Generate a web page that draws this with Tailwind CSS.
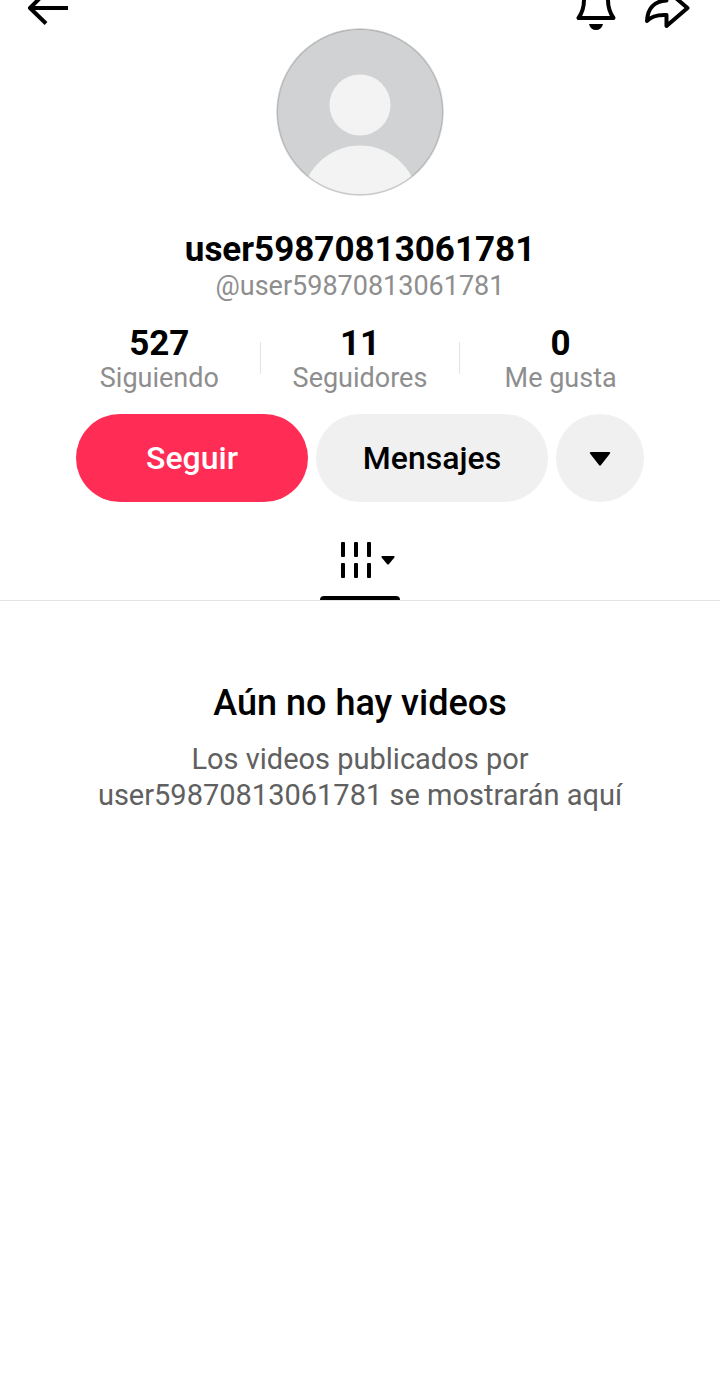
<!DOCTYPE html>
<html lang="es">
<head>
  <meta charset="UTF-8" />
  <meta name="viewport" content="width=device-width, initial-scale=1.0" />
  <title>user59870813061781</title>
  <script src="https://cdn.jsdelivr.net/npm/@tailwindcss/browser@4"></script>
</head>
<body class="bg-white min-h-screen font-['Roboto',sans-serif] text-black">

  <!-- Top bar, scrolled partly out of view -->
  <header class="h-7 flex items-start justify-between pl-6 pr-7">
    <button type="button" aria-label="Volver">
      <svg class="block w-12 h-8" viewBox="0 0 48 32" fill="none" stroke="currentColor" stroke-width="4">
        <path d="M44 8H7M22 -8L6 8L22 23.500" stroke-linejoin="round" />
      </svg>
    </button>
    <div class="flex gap-6">
      <button type="button" aria-label="Notificaciones">
        <svg class="block w-12 h-8" viewBox="0 0 48 32" fill="none" stroke="currentColor" stroke-width="4" stroke-linejoin="round">
          <path d="M12 -8V0C12 8 10 13 6.500 18H41.500C38 13 36 8 36 0V-8" />
          <path d="M17 24H31C30 28 27.500 30 24 30S18 28 17 24Z" fill="currentColor" stroke="none" />
        </svg>
      </button>
      <button type="button" aria-label="Compartir">
        <svg class="block w-12 h-8" viewBox="0 0 48 32" fill="none" stroke="currentColor" stroke-width="4" stroke-linejoin="round">
          <path d="M22.500 -10L43.500 8L22.500 26V15C13 14.500 7.500 16 3 21C3.500 9 10 1 22.500 0.500Z" />
        </svg>
      </button>
    </div>
  </header>

  <main>
    <section class="flex flex-col items-center">
      <svg class="w-42 h-42 rounded-full" viewBox="0 0 168 168" role="img" aria-label="Foto de perfil">
        <defs>
          <clipPath id="avatarClip"><circle cx="84" cy="84" r="83" /></clipPath>
        </defs>
        <g clip-path="url(#avatarClip)">
          <rect width="168" height="168" fill="#d0d2d3" />
          <circle cx="84" cy="77" r="30.500" fill="#f3f3f3" />
          <circle cx="84" cy="176" r="58.500" fill="#f3f3f3" />
        </g>
        <circle cx="84" cy="84" r="83" fill="none" stroke="#000" stroke-opacity="0.150" stroke-width="2" />
      </svg>

      <h1 class="mt-9 text-[35px] leading-9 font-bold">user59870813061781</h1>
      <p class="text-[27px] leading-9 text-[#8e8e8e]">@user59870813061781</p>

      <div class="mt-5 grid grid-cols-3 w-full max-w-[602px] text-center">
        <a href="#siguiendo" class="block">
          <span class="block text-[35px] leading-10 font-bold">527</span>
          <span class="block text-[27px] leading-7 text-[#8e8e8e]">Siguiendo</span>
        </a>
        <a href="#seguidores" class="flex items-center justify-between">
          <span class="w-px h-8 bg-[#e3e3e3]"></span>
          <span>
            <span class="block text-[35px] leading-10 font-bold">11</span>
            <span class="block text-[27px] leading-7 text-[#8e8e8e]">Seguidores</span>
          </span>
          <span class="w-px h-8 bg-[#e3e3e3]"></span>
        </a>
        <a href="#megusta" class="block">
          <span class="block text-[35px] leading-10 font-bold">0</span>
          <span class="block text-[27px] leading-7 text-[#8e8e8e]">Me gusta</span>
        </a>
      </div>

      <div class="mt-[22px] flex gap-2 w-full max-w-142 text-[32px] font-medium">
        <button type="button" class="flex-1 h-22 rounded-full bg-[#ff2c55] text-white">Seguir</button>
        <button type="button" class="flex-1 h-22 rounded-full bg-[#f0f0f0]">Mensajes</button>
        <button type="button" aria-label="Cuentas sugeridas" class="w-22 h-22 rounded-full bg-[#f0f0f0] flex items-center justify-center">
          <svg class="w-6 h-6" viewBox="0 0 24 24" fill="currentColor">
            <path d="M3 6H21Q23 6 22 7.500L13 19Q12 20.500 11 19L2 7.500Q1 6 3 6Z" />
          </svg>
        </button>
      </div>
    </section>

    <!-- Tabs -->
    <nav class="mt-4 flex justify-center border-b border-[#e3e3e3]">
      <button type="button" aria-label="Videos" class="w-20 h-[82px] flex flex-col items-center justify-between">
        <svg class="mt-5 w-20 h-11" viewBox="0 0 80 44" fill="currentColor">
          <rect x="21" y="4" width="4" height="15" rx="1" />
          <rect x="34" y="4" width="4" height="15" rx="1" />
          <rect x="47" y="4" width="4" height="15" rx="1" />
          <rect x="21" y="25" width="4" height="15" rx="1" />
          <rect x="34" y="25" width="4" height="15" rx="1" />
          <rect x="47" y="25" width="4" height="15" rx="1" />
          <path d="M62.500 18H73.500Q75.500 18 74 20L69 26Q68 27 67 26L62 20Q60.500 18 62.500 18Z" />
        </svg>
        <span class="w-20 h-1 rounded-t bg-black"></span>
      </button>
    </nav>

    <section class="mt-20 px-16 text-center">
      <h2 class="text-[36px] leading-11 font-medium">Aún no hay videos</h2>
      <p class="mt-4 mx-auto max-w-142 text-[29px] leading-9 text-[#606060]">Los videos publicados por user59870813061781 se mostrarán aquí</p>
    </section>
  </main>

</body>
</html>
